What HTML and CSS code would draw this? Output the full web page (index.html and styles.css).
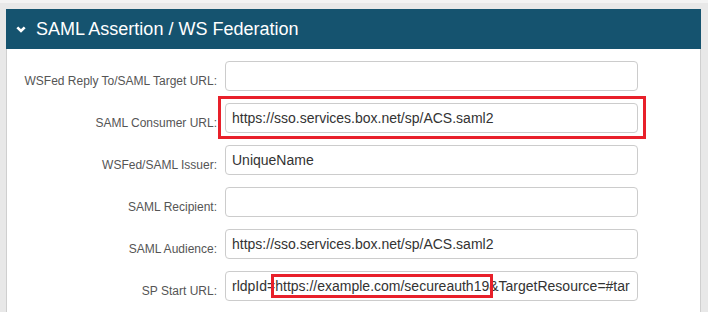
FILE: index.html
```html
<!DOCTYPE html>
<html lang="en">
<head>
    <meta charset="UTF-8">
    <meta name="viewport" content="width=device-width, initial-scale=1.0">
    <title>SAML Assertion / WS Federation</title>
    <link rel="stylesheet" href="styles.css">
</head>
<body>

    <div class="panel">
        <div class="panel-heading">
            <svg class="chevron" width="10" height="7" viewBox="0 0 10 7">
                <polyline points="1.3,1.3 5,5 8.7,1.3" fill="none" stroke="#fff" stroke-width="2.6"/>
            </svg>
            <span>SAML Assertion / WS Federation</span>
        </div>
        <div class="panel-body">
            <div class="row">
                <label>WSFed Reply To/SAML Target URL:</label>
                <input type="text" value="">
            </div>
            <div class="row">
                <label>SAML Consumer URL:</label>
                <div class="highlight">
                    <input type="text" value="https://sso.services.box.net/sp/ACS.saml2">
                </div>
            </div>
            <div class="row">
                <label>WSFed/SAML Issuer:</label>
                <input type="text" value="UniqueName">
            </div>
            <div class="row">
                <label>SAML Recipient:</label>
                <input type="text" value="">
            </div>
            <div class="row">
                <label>SAML Audience:</label>
                <input type="text" value="https://sso.services.box.net/sp/ACS.saml2">
            </div>
            <div class="row">
                <label>SP Start URL:</label>
                <div class="field">rldpId=<span class="mark">https://example.com/secureauth19</span>&amp;TargetResource=#tar</div>
            </div>
        </div>
    </div>

</body>
</html>
```

FILE: styles.css
```css
body {
    margin: 0;
    padding: 6px 7px 0 6px;
    border-top: 3px solid #f3f3f3;
    background-color: #e8e8e8;
    font-family: "Liberation Sans", Arial, sans-serif;
    overflow: hidden;
}

.panel {
    width: 695px;
}

.panel-heading {
    display: flex;
    align-items: center;
    height: 40px;
    padding-left: 10px;
    background-color: #15536f;
    color: white;
    font-size: 18px;
}

.chevron {
    margin-right: 10px;
}

.panel-body {
    box-sizing: border-box;
    display: flex;
    flex-direction: column;
    gap: 12px;
    height: 263px;
    padding-top: 12px;
    background-color: white;
    border-left: 1px solid #cfcfcf;
    border-right: 1px solid #cfcfcf;
}

.row {
    display: grid;
    grid-template-columns: 210px 413px;
    column-gap: 8px;
    height: 30px;
}

label {
    padding-top: 12px;
    line-height: 16px;
    text-align: right;
    font-size: 12px;
    color: #555;
}

input,
.field {
    box-sizing: border-box;
    width: 100%;
    height: 30px;
    margin: 0;
    padding: 0 4px 0 6px;
    border: 1px solid #ccc;
    border-radius: 4px;
    font-family: "Liberation Sans", Arial, sans-serif;
    font-size: 14px;
    color: #333;
    outline: none;
}

.field {
    line-height: 28px;
    white-space: nowrap;
    overflow: hidden;
}

.highlight {
    position: relative;
}

.highlight::after {
    content: "";
    position: absolute;
    top: -7px;
    right: -8px;
    bottom: -6px;
    left: -7px;
    border: 3px solid #e8202a;
    pointer-events: none;
}

.mark {
    outline: 3px solid #e8202a;
    outline-offset: 1px;
}
```
